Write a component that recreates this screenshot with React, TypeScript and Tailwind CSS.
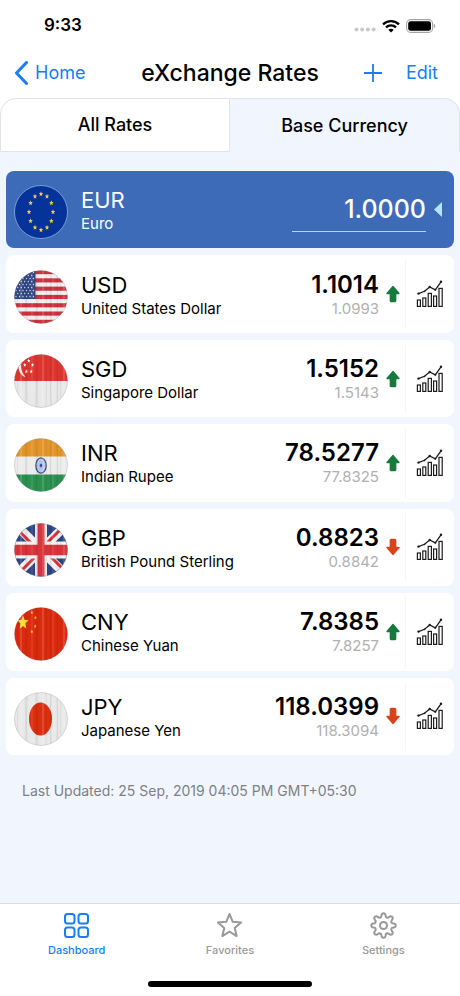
import { ReactElement, useState } from 'react';

type Rate = {
  code: string;
  name: string;
  value: string;
  previous: string;
  up: boolean;
};

const rates: Rate[] = [
  { code: 'USD', name: 'United States Dollar', value: '1.1014', previous: '1.0993', up: true },
  { code: 'SGD', name: 'Singapore Dollar', value: '1.5152', previous: '1.5143', up: true },
  { code: 'INR', name: 'Indian Rupee', value: '78.5277', previous: '77.8325', up: true },
  { code: 'GBP', name: 'British Pound Sterling', value: '0.8823', previous: '0.8842', up: false },
  { code: 'CNY', name: 'Chinese Yuan', value: '7.8385', previous: '7.8257', up: true },
  { code: 'JPY', name: 'Japanese Yen', value: '118.0399', previous: '118.3094', up: false },
];

const starPoints = (cx: number, cy: number, rx: number, ry: number) =>
  Array.from({ length: 10 }, (_, i) => {
    const k = i % 2 === 0 ? 1 : 0.45;
    const a = (Math.PI / 5) * i - Math.PI / 2;
    return `${(cx + Math.cos(a) * rx * k).toFixed(2)},${(cy + Math.sin(a) * ry * k).toFixed(2)}`;
  }).join(' ');

const Star = ({ x, y, rx, ry, fill }: { x: number; y: number; rx: number; ry: number; fill: string }) => (
  <polygon points={starPoints(x, y, rx, ry)} fill={fill} />
);

// wood grain over the flag
const grain = [4, 7, 11, 13, 18, 22, 24, 29, 32, 37, 39, 43, 47, 50];

const flags: Record<string, ReactElement> = {
  EUR: (
    <>
      <rect width="54" height="54" fill="#053399" />
      {Array.from({ length: 12 }, (_, i) => {
        const a = (Math.PI / 6) * i;
        return (
          <Star key={i} x={27 + Math.sin(a) * 12} y={27 - Math.cos(a) * 18} rx={2.3} ry={2.7} fill="#f0cf3c" />
        );
      })}
    </>
  ),
  USD: (
    <>
      <rect width="54" height="54" fill="#f3eeee" />
      {[0, 1, 2, 3, 4, 5, 6].map((i) => (
        <rect key={i} y={i * 8.3} width="54" height="4.15" fill="#cc3340" />
      ))}
      <rect width="21.5" height="29" fill="#2f4681" />
      {Array.from({ length: 9 }, (_, r) =>
        Array.from({ length: r % 2 ? 5 : 6 }, (_, c) => (
          <Star
            key={`${r}-${c}`}
            x={2 + c * 3.5 + (r % 2 ? 1.75 : 0)}
            y={2.5 + r * 3}
            rx={0.9}
            ry={1.2}
            fill="#e4e8f4"
          />
        ))
      )}
    </>
  ),
  SGD: (
    <>
      <rect width="54" height="54" fill="#e9e9ea" />
      <rect width="54" height="27" fill="#df352f" />
      <path d="M9.5 2.5C2 5 3 21 11.5 23C6.500 17.500 5 8.500 9.500 2.500Z" fill="#fbeeee" />
      <Star x={14.7} y={6.7} rx={1.7} ry={2.2} fill="#fff" />
      <Star x={10.8} y={11} rx={1.7} ry={2.2} fill="#fff" />
      <Star x={18.5} y={11} rx={1.7} ry={2.2} fill="#fff" />
      <Star x={12.4} y={17.5} rx={1.7} ry={2.2} fill="#fff" />
      <Star x={17.2} y={17.5} rx={1.7} ry={2.2} fill="#fff" />
    </>
  ),
  INR: (
    <>
      <rect width="54" height="54" fill="#ececed" />
      <rect width="54" height="18.500" fill="#e2962a" />
      <rect y="36.500" width="54" height="18" fill="#2c9150" />
      <ellipse cx="27" cy="27.500" rx="5.200" ry="7.700" fill="#c3cfe9" stroke="#3d4f7d" strokeWidth="1.200" />
      {[0, 30, 60, 90, 120, 150].map((d) => {
        const a = (d * Math.PI) / 180;
        const x = Math.cos(a) * 4.6;
        const y = Math.sin(a) * 7;
        return (
          <line key={d} x1={27 - x} y1={27.5 - y} x2={27 + x} y2={27.5 + y} stroke="#7f92c4" strokeWidth="0.300" />
        );
      })}
      <ellipse cx="27" cy="27.500" rx="1.300" ry="1.800" fill="#3a4f9c" />
    </>
  ),
  GBP: (
    <>
      <rect width="54" height="54" fill="#2b4685" />
      <path d="M0 0L54 54M54 0L0 54" stroke="#f4f1f3" strokeWidth="9" />
      <path d="M-1 2L26 29M28 25L55 52M55 -2L28 25M26 29L-1 56" stroke="#d8343a" strokeWidth="3" />
      <path d="M27 0V54" stroke="#f4f1f3" strokeWidth="12" />
      <path d="M0 27H54" stroke="#f4f1f3" strokeWidth="17" />
      <path d="M27 0V54" stroke="#d8343a" strokeWidth="7" />
      <path d="M0 27H54" stroke="#d8343a" strokeWidth="10.500" />
    </>
  ),
  CNY: (
    <>
      <rect width="54" height="54" fill="#db2a0e" />
      <Star x={9} y={15.5} rx={5.8} ry={7.6} fill="#f7e233" />
      <Star x={17.8} y={5.5} rx={1.6} ry={2.3} fill="#f0b429" />
      <Star x={21.5} y={10.7} rx={1.6} ry={2.3} fill="#f0b429" />
      <Star x={21.2} y={19.3} rx={1.6} ry={2.3} fill="#f0b429" />
      <Star x={17.8} y={24.7} rx={1.6} ry={2.3} fill="#f0b429" />
    </>
  ),
  JPY: (
    <>
      <rect width="54" height="54" fill="#e9e9ea" />
      <ellipse cx="26.500" cy="27" rx="11.500" ry="16.500" fill="#dc2f0f" />
    </>
  ),
};

const Flag = ({ code }: { code: string }) => (
  <svg viewBox="0 0 54 54" className="h-[54px] w-[54px] shrink-0" aria-hidden="true">
    <clipPath id={`flag-${code}`}>
      <circle cx="27" cy="27" r="26.500" />
    </clipPath>
    <g clipPath={`url(#flag-${code})`}>
      {flags[code]}
      {code !== 'EUR' &&
        grain.map((x, i) => (
          <path
            key={x}
            d={`M${x} 0Q${x + (i % 3) - 1} 27 ${x} 54`}
            fill="none"
            stroke={i % 3 === 1 ? '#fff' : '#000'}
            strokeOpacity={i % 3 === 1 ? 0.2 : 0.08}
            strokeWidth={i % 2 ? 1.4 : 0.8}
          />
        ))}
    </g>
    <circle
      cx="27"
      cy="27"
      r="26.500"
      fill="none"
      stroke={code === 'EUR' ? '#a9c4ee' : '#777'}
      strokeOpacity={code === 'EUR' ? 0.8 : 0.3}
      strokeWidth="0.800"
    />
  </svg>
);

const TrendArrow = ({ up }: { up: boolean }) => (
  <svg
    viewBox="0 0 14 18"
    className={`h-[18px] w-[14px] shrink-0 ${up ? 'text-[#167a3c]' : 'rotate-180 text-[#d9431b]'}`}
    role="img"
    aria-label={up ? 'Up' : 'Down'}
  >
    <path
      d="M7 1.500L13 8.500H9.700V15.700Q9.700 16.700 8.700 16.700H5.300Q4.300 16.700 4.300 15.700V8.500H1Z"
      fill="currentColor"
      stroke="currentColor"
      strokeWidth="1.300"
      strokeLinejoin="round"
    />
  </svg>
);

const ChartIcon = () => (
  <svg viewBox="0 0 28 28" className="h-7 w-7" fill="none" stroke="#1c1c1c" strokeWidth="1.200" aria-hidden="true">
    <rect x="1.400" y="20" width="3" height="6.400" />
    <rect x="6.800" y="18" width="3" height="8.400" />
    <rect x="12.200" y="13.400" width="3.200" height="13" />
    <rect x="17.600" y="16" width="3" height="10.400" />
    <rect x="23" y="8.400" width="3.200" height="18" />
    <path d="M2.500 13.600L8.500 11.300L13.700 7L19.300 9.800L25 1.800" strokeWidth="1.300" />
    <g fill="#1c1c1c" stroke="none">
      <circle cx="2.500" cy="13.600" r="1.200" />
      <circle cx="8.500" cy="11.300" r="0.900" />
      <circle cx="13.700" cy="7" r="1.200" />
      <circle cx="19.300" cy="9.800" r="1" />
      <circle cx="25" cy="1.800" r="1.200" />
    </g>
  </svg>
);

const StatusBar = () => (
  <div className="flex h-12 items-center justify-between pt-[3px] pr-6 pl-11">
    <span className="text-[17px] font-semibold">9:33</span>
    <div className="flex items-center gap-[6px]">
      <svg viewBox="0 0 22 5" className="mt-2 h-[5px] w-[22px]" fill="#c9c9c9" aria-hidden="true">
        <circle cx="2.500" cy="2.500" r="2" />
        <circle cx="8.200" cy="2.500" r="2" />
        <circle cx="13.900" cy="2.500" r="2" />
        <circle cx="19.600" cy="2.500" r="2" />
      </svg>
      <svg viewBox="0 0 18 14" className="h-[14px] w-[18px]" fill="none" stroke="#000" strokeWidth="2.400" aria-hidden="true">
        <path d="M1 5.300C5.500 1 12.500 1 17 5.300" />
        <path d="M4 8.400C6.800 5.700 11.200 5.700 14 8.400" />
        <path d="M9 13.500L6.300 10.800C7.800 9.500 10.200 9.500 11.700 10.800Z" fill="#000" stroke="none" />
      </svg>
      <svg viewBox="0 0 30 14" className="h-[14px] w-[30px]" aria-hidden="true">
        <rect x="0.600" y="0.600" width="26" height="12.800" rx="4" fill="none" stroke="#a5a5a5" strokeWidth="1.100" />
        <rect x="2.200" y="2.200" width="22.800" height="9.600" rx="2.400" fill="#000" />
        <path d="M27.800 4.800V9.200C29.700 8.500 29.700 5.500 27.800 4.800Z" fill="#a5a5a5" />
      </svg>
    </div>
  </div>
);

const NavBar = () => (
  <header className="grid h-[50px] grid-cols-[1fr_auto_1fr] items-center px-[14px] text-[#147efb]">
    <a href="#home" className="flex items-center gap-[7px] text-lg">
      <svg viewBox="0 0 14 24" className="h-6 w-[14px]" fill="none" stroke="currentColor" strokeWidth="3" aria-hidden="true">
        <path d="M12.500 1.500L2.500 12L12.500 22.500" strokeLinecap="round" strokeLinejoin="round" />
      </svg>
      Home
    </a>
    <h1 className="text-[23px] font-medium text-black">eXchange Rates</h1>
    <div className="flex items-center justify-end gap-6 pr-2 text-lg">
      <button type="button" aria-label="Add currency">
        <svg viewBox="0 0 18 18" className="h-[18px] w-[18px]" stroke="currentColor" strokeWidth="1.800" aria-hidden="true">
          <path d="M9 0V18M0 9H18" />
        </svg>
      </button>
      <button type="button">Edit</button>
    </div>
  </header>
);

const Currency = ({ code, name }: { code: string; name: string }) => (
  <div className="flex flex-1 items-center gap-[13px] pt-[5px]">
    <Flag code={code} />
    <div>
      <p className="text-[22px] leading-6">{code}</p>
      <p className="text-[15px] leading-6">{name}</p>
    </div>
  </div>
);

const RateRow = ({ rate }: { rate: Rate }) => (
  <li className="flex min-h-[72px] items-center rounded-lg bg-white pl-2">
    <Currency code={rate.code} name={rate.name} />
    <div className="mr-[7px] pt-[5px] text-right">
      <p className="text-2xl leading-6 font-semibold">{rate.value}</p>
      <p className="text-[15px] leading-6 text-[#b0b0b0]">{rate.previous}</p>
    </div>
    <TrendArrow up={rate.up} />
    <button
      type="button"
      aria-label={`${rate.code} chart`}
      className="my-1 ml-[5px] flex w-[49px] items-center justify-center self-stretch border-l border-[#f3f5f9]"
    >
      <ChartIcon />
    </button>
  </li>
);

const tabItems = [
  {
    label: 'Dashboard',
    icon: (
      <>
        <rect x="2" y="2" width="9.500" height="9.500" rx="2.500" />
        <rect x="15.500" y="2" width="9.500" height="9.500" rx="2.500" />
        <rect x="2" y="15.500" width="9.500" height="9.500" rx="2.500" />
        <rect x="15.500" y="15.500" width="9.500" height="9.500" rx="2.500" />
      </>
    ),
  },
  {
    label: 'Favorites',
    icon: <polygon points={starPoints(13.5, 14.2, 12.2, 12.2)} strokeLinejoin="round" />,
  },
  {
    label: 'Settings',
    icon: (
      <>
        <path
          d={
            Array.from({ length: 96 }, (_, i) => {
              const a = (Math.PI * 2 * i) / 96;
              const r = 10.4 + Math.tanh(Math.cos(a * 8) * 1.8) * 1.9;
              return `${i ? 'L' : 'M'}${(13.5 + Math.sin(a) * r).toFixed(2)} ${(13.5 - Math.cos(a) * r).toFixed(2)}`;
            }).join('') + 'Z'
          }
          strokeLinejoin="round"
        />
        <circle cx="13.500" cy="13.500" r="3.500" />
      </>
    ),
  },
];

const App = () => {
  const [amount, setAmount] = useState<string>('1.0000');
  const [tab, setTab] = useState<string>('Dashboard');

  return (
    <div className="flex min-h-screen flex-col bg-[#f1f6fe] font-['Inter','Liberation_Sans',sans-serif] text-black">
      <div className="bg-white">
        <StatusBar />
        <NavBar />
        {/* tabs */}
        <div className="grid h-[54px] grid-cols-2 text-lg font-medium">
          <button type="button" className="rounded-tl-2xl border border-[#e0e3e8] bg-white">
            All Rates
          </button>
          <button type="button" className="rounded-tr-2xl border-t border-r border-[#e0e3e8] bg-[#f1f6fe]">
            Base Currency
          </button>
        </div>
      </div>

      <main className="flex flex-1 flex-col px-[6px] pt-[19px]">
        <ul className="grid flex-1 auto-rows-fr gap-[7px]">
          {/* base currency */}
          <li className="flex min-h-[72px] items-center rounded-lg bg-[#3d6bb7] pr-3 pl-2 text-white">
            <Currency code="EUR" name="Euro" />
            <input
              aria-label="EUR amount"
              className="h-11 w-[134px] border-b border-[#a9dcf5] bg-transparent text-right text-[25px] font-medium outline-none"
              value={amount}
              onChange={(e) => setAmount(e.target.value)}
            />
            <svg viewBox="0 0 8 15" className="ml-2 h-[15px] w-2" fill="#b5e3f7" aria-hidden="true">
              <path d="M8 0V15L0 7.500Z" />
            </svg>
          </li>
          {rates.map((rate) => (
            <RateRow key={rate.code} rate={rate} />
          ))}
        </ul>
        <p className="h-[148px] px-4 pt-6 text-sm leading-6 text-[#7d8086]">
          Last Updated: 25 Sep, 2019 04:05 PM GMT+05:30
        </p>
      </main>

      {/* bottom bar */}
      <footer className="border-t border-[#d9dde3] bg-white">
        <nav className="grid h-[60px] grid-cols-3">
          {tabItems.map((item) => (
            <button
              key={item.label}
              type="button"
              onClick={() => setTab(item.label)}
              className={`flex flex-col items-center pt-2 text-[11px] font-medium ${
                tab === item.label ? 'text-[#147efb]' : 'text-[#999]'
              }`}
            >
              <svg viewBox="0 0 27 27" className="h-[27px] w-[27px]" fill="none" stroke="currentColor" strokeWidth="2" aria-hidden="true">
                {item.icon}
              </svg>
              <span className="mt-[3px] leading-4">{item.label}</span>
            </button>
          ))}
        </nav>
        <div className="flex h-8 justify-center pt-[17px]">
          <div className="h-[6px] w-[164px] rounded-full bg-black" />
        </div>
      </footer>
    </div>
  );
};

export default App;
